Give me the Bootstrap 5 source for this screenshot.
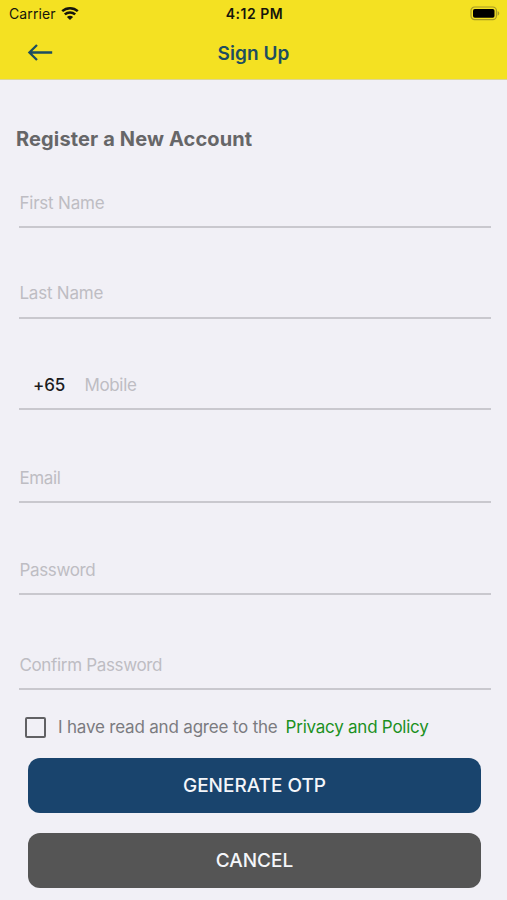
<!DOCTYPE html>
<html lang="en">
<head>
<meta charset="utf-8">
<meta name="viewport" content="width=device-width, initial-scale=1">
<title>Sign Up</title>
<link href="https://cdn.jsdelivr.net/npm/bootstrap@5.3.0/dist/css/bootstrap.min.css" rel="stylesheet">
<style>
  body { font-family: Inter, "Liberation Sans", sans-serif; background: #f1f0f6; height: 900px; overflow: hidden; }
  .top-area { background: #f4e122; height: 79px; box-shadow: 0 1px 0 #ddd694; color: #15150c; }
  .status-bar { height: 27px; font-size: 14px; padding: 0 7px 0 9px; }
  .status-bar > * { flex: 1 1 0; line-height: 27px; }
  .carrier { letter-spacing: .1px; }
  .clock { font-weight: 600; font-size: 14px; letter-spacing: .5px; }
  .title-bar { height: 52px; padding: 0 27px; color: #1d4d60; }
  .title-bar > * { flex: 1 1 0; }
  .title-bar h1 { font-size: 19px; font-weight: 600; letter-spacing: .05px; line-height: 52px; padding-top: 1px; }
  .back { color: inherit; line-height: 1; }
  .heading { font-size: 20px; font-weight: 700; color: #666668; line-height: 24px; padding: 48px 16px 0; letter-spacing: .13px; }
  .field { margin: 0 16px 0 19px; height: 49px; border-bottom: 2px solid #c9c8ce; }
  .field .form-control { height: 48px; font-size: 17px; line-height: 48px; letter-spacing: -.33px; color: #1c1c1e; text-indent: .4px; }
  .field .form-control::placeholder { color: #bebdc3; opacity: 1; }
  .field .form-control:focus { box-shadow: none; background: transparent; }
  .f1 { margin-top: 28px; } .f2 { margin-top: 42px; } .f3 { margin-top: 42px; }
  .f4 { margin-top: 44px; } .f5 { margin-top: 43px; } .f6 { margin-top: 46px; }
  .f1 .form-control { letter-spacing: -.2px; }
  .f2 .form-control { line-height: 46px; height: 46px; letter-spacing: -.2px; }
  .dial { font-size: 17px; font-weight: 500; color: #1c1c1e; width: 65px; padding: 3px 0 0 14px; letter-spacing: -.1px; }
  .terms { height: 68px; padding: 7px 25px 0; font-size: 17px; }
  .terms .form-check-input { width: 21px; height: 21px; margin: 0 12px 0 0; border: 2px solid #616164; border-radius: 2px; background-color: transparent; flex: none; }
  .terms label { color: #7b7b80; letter-spacing: -.19px; }
  .terms a { color: #1c911f; margin-left: 8px; letter-spacing: -.24px; }
  .actions { padding: 0 26px 0 28px; gap: 20px; }
  .actions .btn { height: 55px; border: 0; border-radius: 12px; font-size: 19px; font-weight: 500; color: #f4f6fa; padding: 2px 0 0; }
  .btn-otp, .btn-otp:hover { background: #19446d; }
  .btn-stop, .btn-stop:hover { background: #555; }
</style>
</head>
<body>
<header class="top-area">
  <div class="status-bar d-flex align-items-center">
    <div class="d-flex align-items-center"><span class="carrier">Carrier</span>
      <svg class="ms-1" width="20" height="15" viewBox="0 0 20 15" fill="none" stroke="#15150c" stroke-width="2.5"><path d="M2.2 5.2C6.6 1.1 13.4 1.1 17.8 5.2M4.8 8.4c3-2.7 7.4-2.7 10.4 0"/><path d="M10 14 6.9 10.9c1.8-1.6 4.4-1.6 6.2 0Z" fill="#15150c" stroke="none"/></svg>
    </div>
    <div class="clock text-center">4:12 PM</div>
    <div class="d-flex justify-content-end"><svg width="30" height="15" viewBox="0 0 30 15"><rect x="1" y="1" width="25.4" height="12.6" rx="3.6" fill="none" stroke="#a59a27" stroke-width="1.2"/><rect x="3" y="3" width="21.5" height="8.7" rx="1.8" fill="#000"/><path d="M27.6 5c2.2.8 2.2 4 0 4.7Z" fill="#a59a27"/></svg></div>
  </div>
  <nav class="title-bar d-flex align-items-center">
    <div><a href="#" class="back" aria-label="Back"><svg class="d-block" width="26" height="18" viewBox="0 0 26 18" fill="none" stroke="currentColor" stroke-width="2.3"><path d="M25.2 8.5H2.6M10 1 2.4 8.5l7.6 7.5"/></svg></a></div>
    <h1 class="text-center text-nowrap m-0">Sign Up</h1>
    <div></div>
  </nav>
</header>
<main>
  <h2 class="heading m-0">Register a New Account</h2>
  <form>
    <div class="field f1"><input class="form-control bg-transparent border-0 rounded-0 p-0" placeholder="First Name"></div>
    <div class="field f2"><input class="form-control bg-transparent border-0 rounded-0 p-0" placeholder="Last Name"></div>
    <div class="field f3 d-flex align-items-center"><span class="dial flex-shrink-0">+65</span><input type="tel" class="form-control bg-transparent border-0 rounded-0 p-0" placeholder="Mobile"></div>
    <div class="field f4"><input type="email" class="form-control bg-transparent border-0 rounded-0 p-0" placeholder="Email"></div>
    <div class="field f5"><input type="password" class="form-control bg-transparent border-0 rounded-0 p-0" placeholder="Password"></div>
    <div class="field f6"><input type="password" class="form-control bg-transparent border-0 rounded-0 p-0" placeholder="Confirm Password"></div>
    <div class="terms d-flex align-items-center text-nowrap">
      <input class="form-check-input" type="checkbox" id="agree">
      <label for="agree">I have read and agree to the</label><a href="#" class="text-decoration-none">Privacy and Policy</a>
    </div>
    <div class="actions d-grid">
      <button type="button" class="btn btn-otp">GENERATE OTP</button>
      <button type="button" class="btn btn-stop">CANCEL</button>
    </div>
  </form>
</main>
<script src="https://cdn.jsdelivr.net/npm/bootstrap@5.3.0/dist/js/bootstrap.bundle.min.js"></script>
</body>
</html>
